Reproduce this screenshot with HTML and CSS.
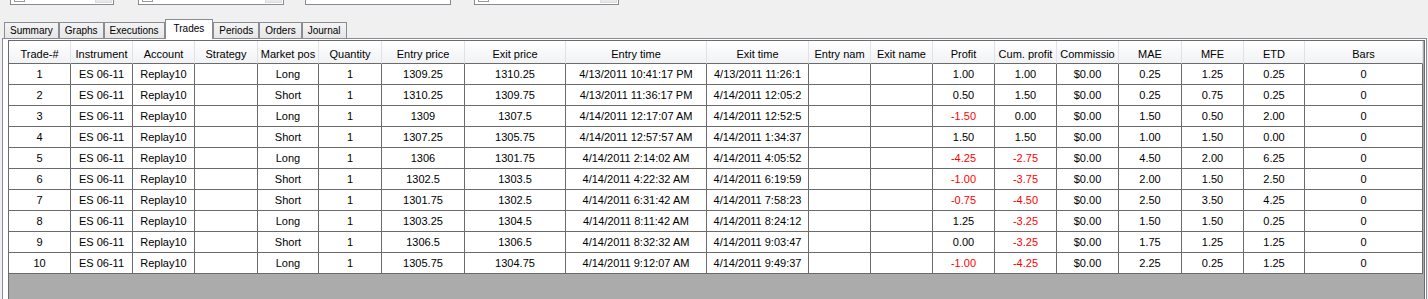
FILE: index.html
```html
<!DOCTYPE html>
<html lang="en">
<head>
<meta charset="utf-8">
<title>Strategy Performance - Trades</title>
<link rel="stylesheet" href="styles.css">
</head>
<body>

<!-- Filter combos (cut off at the top) -->
<div class="toolbar">
 <div class="combo c1"><span class="chk"></span><span class="drop"></span></div>
 <div class="combo c2"><span class="chk"></span><span class="drop"></span></div>
 <div class="combo c3"></div>
 <div class="combo c4"><span class="chk"></span><span class="drop"></span></div>
</div>

<!-- Tabs -->
<div class="tabs">
 <div class="tab">Summary</div>
 <div class="tab">Graphs</div>
 <div class="tab">Executions</div>
 <div class="tab active">Trades</div>
 <div class="tab">Periods</div>
 <div class="tab">Orders</div>
 <div class="tab">Journal</div>
</div>

<div class="page">
 <div class="grid" id="tradesGrid">
  <div class="row head">
   <span>Trade-#</span><span>Instrument</span><span>Account</span><span>Strategy</span><span>Market pos</span><span>Quantity</span><span>Entry price</span><span>Exit price</span><span>Entry time</span><span>Exit time</span><span>Entry nam</span><span>Exit name</span><span>Profit</span><span>Cum. profit</span><span>Commissio</span><span>MAE</span><span>MFE</span><span>ETD</span><span>Bars</span>
  </div>
 </div>
</div>

<script>
// --------- Trades data ---------
// [#, pos, entry price, exit price, entry time, exit time, profit, cum profit, MAE, MFE, ETD]
const trades=[
 [1,'Long','1309.25','1310.25','4/13/2011 10:41:17 PM','4/13/2011 11:26:1','1.00','1.00','0.25','1.25','0.25'],
 [2,'Short','1310.25','1309.75','4/13/2011 11:36:17 PM','4/14/2011 12:05:2','0.50','1.50','0.25','0.75','0.25'],
 [3,'Long','1309','1307.5','4/14/2011 12:17:07 AM','4/14/2011 12:52:5','-1.50','0.00','1.50','0.50','2.00'],
 [4,'Short','1307.25','1305.75','4/14/2011 12:57:57 AM','4/14/2011 1:34:37','1.50','1.50','1.00','1.50','0.00'],
 [5,'Long','1306','1301.75','4/14/2011 2:14:02 AM','4/14/2011 4:05:52','-4.25','-2.75','4.50','2.00','6.25'],
 [6,'Short','1302.5','1303.5','4/14/2011 4:22:32 AM','4/14/2011 6:19:59','-1.00','-3.75','2.00','1.50','2.50'],
 [7,'Short','1301.75','1302.5','4/14/2011 6:31:42 AM','4/14/2011 7:58:23','-0.75','-4.50','2.50','3.50','4.25'],
 [8,'Long','1303.25','1304.5','4/14/2011 8:11:42 AM','4/14/2011 8:24:12','1.25','-3.25','1.50','1.50','0.25'],
 [9,'Short','1306.5','1306.5','4/14/2011 8:32:32 AM','4/14/2011 9:03:47','0.00','-3.25','1.75','1.25','1.25'],
 [10,'Long','1305.75','1304.75','4/14/2011 9:12:07 AM','4/14/2011 9:49:37','-1.00','-4.25','2.25','0.25','1.25']
];

// --------- Build rows ---------
const grid=document.getElementById('tradesGrid');
const money=v=>`<span${v.startsWith('-')?' class="neg"':''}>${v}</span>`;
trades.forEach(([n,pos,ep,xp,et,xt,pr,cum,mae,mfe,etd])=>{
 grid.insertAdjacentHTML('beforeend',
  `<div class="row"><span>${n}</span><span>ES 06-11</span><span>Replay10</span><span></span><span>${pos}</span><span>1</span>`+
  `<span>${ep}</span><span>${xp}</span><span>${et}</span><span>${xt}</span><span></span><span></span>`+
  `${money(pr)}${money(cum)}<span>$0.00</span><span>${mae}</span><span>${mfe}</span><span>${etd}</span><span>0</span></div>`);
});
</script>

</body>
</html>
```

FILE: styles.css
```css
/* ---------- Base ---------- */
*{box-sizing:border-box}
html,body{height:100%}
body{margin:0;background:#f0f0f0;font-family:"Liberation Sans",Arial,sans-serif;font-size:11px;color:#000;overflow:hidden;display:flex;flex-direction:column}

/* ---------- Top combos ---------- */
.toolbar{height:5px;flex:none;overflow:hidden;display:flex;align-items:flex-end;padding-left:10px}
.combo{height:22px;border:1px solid #858a94;background:#fff;display:flex;align-items:flex-end;padding:0 1px 1px 3px}
.combo.c1{width:104px}
.combo.c2{width:146px;margin-left:24px}
.combo.c3{width:146px;margin-left:21px}
.combo.c4{width:145px;margin-left:23px}
.chk{width:11px;height:13px;border:1px solid #9a9a9a;background:#fff;margin-bottom:1px}
.drop{width:17px;height:20px;margin-left:auto;background:#e8e8e8;border:1px solid #dcdcdc}

/* ---------- Tabs ---------- */
.tabs{flex:none;height:19px;margin-top:14px;padding-left:4px;display:flex;align-items:flex-end}
.tab{height:16px;padding:0 5px;border:1px solid #898c95;border-bottom:none;background:linear-gradient(#f4f4f4,#e6e6e6);font-size:10px;line-height:15px;white-space:nowrap}
.tab.active{height:20px;padding:0 8px;margin-bottom:-1px;background:#fff;line-height:18px;position:relative;z-index:1}

/* ---------- Tab page & grid ---------- */
.page{flex:1;min-height:0;margin:0 1px 0 2px;padding:1px 1px 0 5px;border:1px solid #898c95;border-bottom:none;background:#fff;display:flex}
.grid{flex:1;border:1px solid #6b6b6b;border-bottom:none;background:#ababab;overflow:hidden}
.row{display:grid;grid-template-columns:62px 62px 62px 63px 61px 63px 83px 101px 141px 102px 62px 62px 62px 62px 62px 63px 62px 61px 118px;width:max-content}
.row span{height:21px;line-height:20px;border-right:1px solid #6b6b6b;border-bottom:1px solid #6b6b6b;background:#fff;text-align:center;white-space:nowrap;overflow:hidden}
.row .neg{color:#f00}
.head span{height:23px;padding-top:5px;line-height:17px;border-right-color:#dfe2e6;background:linear-gradient(#fff,#f1f2f4)}
```
